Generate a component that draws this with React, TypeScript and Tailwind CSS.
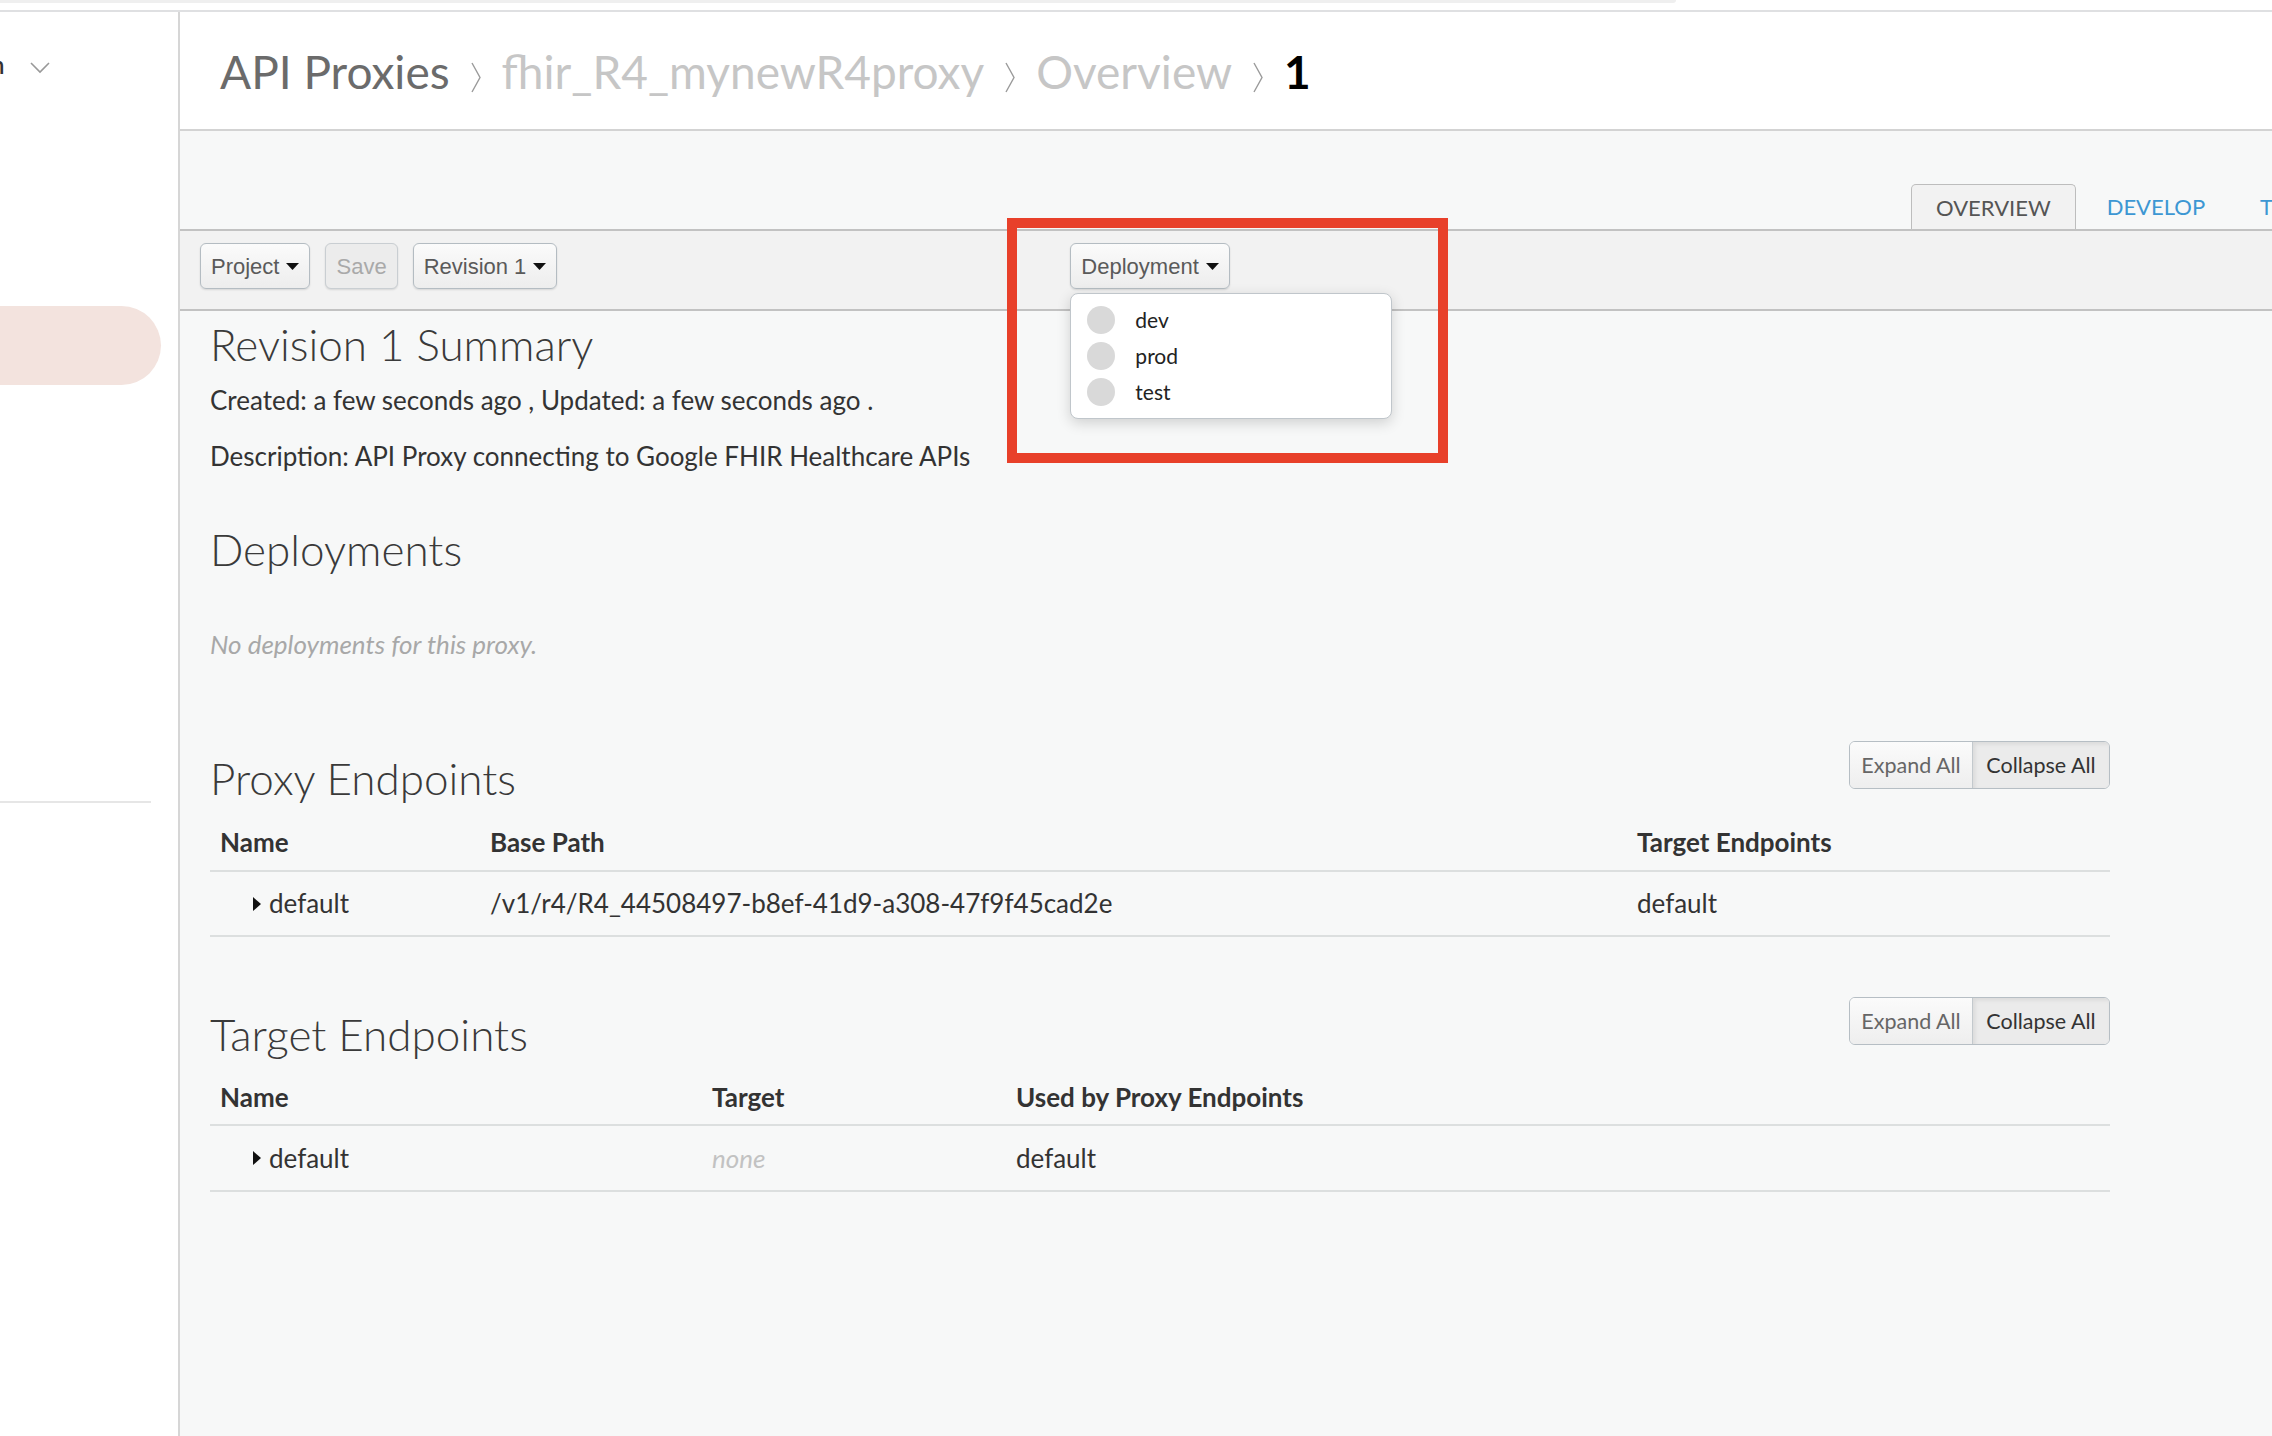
import React from "react";

const lato = { fontFamily: "Lato, 'Open Sans', sans-serif" };

function Caret() {
  return (
    <svg width="13" height="7" viewBox="0 0 13 7" className="shrink-0">
      <polygon points="0,0 13,0 6.5,7" fill="#111" />
    </svg>
  );
}

function RowCaret() {
  return (
    <svg width="8" height="14" viewBox="0 0 8 14" className="shrink-0">
      <polygon points="0,0 8,7 0,14" fill="#111" />
    </svg>
  );
}

function Sep() {
  return (
    <svg width="14" height="31" viewBox="0 0 14 31" className="mx-[19px] mt-[13px] shrink-0">
      <polyline points="3,1 11,15.5 3,30" fill="none" stroke="#9a9a9a" strokeWidth="1.4" />
    </svg>
  );
}

function ToolButton({ label, caret, disabled }: { label: string; caret?: boolean; disabled?: boolean }) {
  return (
    <div
      className={
        "h-[46px] px-[10px] flex items-center gap-[7px] rounded-[6px] border-[1.5px] text-[22px] shadow-[0_1px_2px_rgba(0,0,0,0.12)] " +
        (disabled
          ? "bg-[#ececec] border-[#c9ced2] text-[#a9a9a9]"
          : "bg-gradient-to-b from-[#fbfbfb] to-[#ededed] border-[#b4bcc2] text-[#5a5a5a]")
      }
      style={{ fontFamily: "'Liberation Sans', Arial, sans-serif" }}
    >
      <span>{label}</span>
      {caret && <Caret />}
    </div>
  );
}

function ExpandCollapse() {
  return (
    <div className="flex h-[48px] rounded-[6px] border-[1.5px] border-[#b6bec4] overflow-hidden text-[21.5px]">
      <div className="w-[123px] flex items-center justify-center bg-gradient-to-b from-[#fbfbfb] to-[#eeeeee] text-[#666] border-r-[1.5px] border-[#c3c9cd]">
        Expand All
      </div>
      <div className="w-[136px] flex items-center justify-center bg-[#ebebeb] text-[#333] shadow-[inset_2px_2px_4px_rgba(0,0,0,0.08)]">
        Collapse All
      </div>
    </div>
  );
}

export default function App() {
  return (
    <div className="w-[2272px] h-[1436px] bg-white overflow-hidden flex flex-col" style={lato}>
      {/* top strip */}
      <div className="h-[10px] shrink-0">
        <div className="h-[3px] w-[1676px] bg-[#efefef] rounded-br-[3px]" />
      </div>
      <div className="flex-1 flex border-t-2 border-[#dfe0e2] pr-[2px]">
        {/* sidebar */}
        <aside className="w-[180px] shrink-0 border-r-2 border-[#d6d6d6] flex flex-col">
          <div className="h-[96px] flex items-center pt-[10px]">
            <span className="text-[24px] font-semibold text-[#333] -ml-[9px]">n</span>
            <svg width="20" height="12" viewBox="0 0 20 12" className="ml-[26px] mt-[6px]">
              <polyline points="1,1 10,10 19,1" fill="none" stroke="#999" strokeWidth="1.6" />
            </svg>
          </div>
          <div className="mt-[198px] h-[79px] w-[161px] bg-[#f3e3de] rounded-r-full" />
          <div className="mt-[416px] h-[2px] w-[151px] bg-[#e6e6e6]" />
        </aside>

        {/* main */}
        <main className="flex-1 flex flex-col bg-[#f7f8f8] border-r-2 border-[#e4e4e4]">
          {/* breadcrumb */}
          <header className="h-[119px] shrink-0 bg-white border-b-2 border-[#d3d3d3] flex items-start pl-[40px] pt-[37px]">
            <div className="flex items-start text-[46px] leading-none">
              <span className="text-[#6b6b6b]">API Proxies</span>
              <Sep />
              <span className="text-[#c6c6c6]">fhir_R4_mynewR4proxy</span>
              <Sep />
              <span className="text-[#c6c6c6]">Overview</span>
              <Sep />
              <span className="text-black font-bold">1</span>
            </div>
          </header>

          {/* tabs */}
          <div className="h-[98px] shrink-0 flex items-end pl-[1731px] overflow-hidden">
            <div className="shrink-0 h-[46px] px-[24px] flex items-center rounded-t-[5px] border-[1.5px] border-b-0 border-[#bdbdbd] bg-[#f2f2f2] text-[22px] text-[#555] relative top-[1px]">
              OVERVIEW
            </div>
            <div className="shrink-0 h-[46px] pl-[31px] pr-[24px] flex items-center text-[22px] text-[#3d97d3]">
              DEVELOP
            </div>
            <div className="shrink-0 h-[46px] pl-[31px] flex items-center text-[22px] text-[#3d97d3]">
              TRACE
            </div>
          </div>

          {/* toolbar */}
          <div className="h-[82px] shrink-0 bg-[#f2f2f2] border-y-2 border-[#c2c2c2] flex items-start pt-[12px] pl-[20px]">
            <div className="flex gap-[15px]">
              <ToolButton label="Project" caret />
              <ToolButton label="Save" disabled />
              <ToolButton label="Revision 1" caret />
            </div>
            <div className="relative ml-[513px]">
              <ToolButton label="Deployment" caret />
              <div className="absolute left-0 top-[50px] w-[322px] py-[8px] bg-white rounded-[8px] border-[1.5px] border-[#c0c6cb] shadow-[0_4px_14px_rgba(0,0,0,0.16)] z-10">
                {["dev", "prod", "test"].map((env) => (
                  <div key={env} className="h-[36px] flex items-center pl-[16px]">
                    <span className="w-[28px] h-[28px] rounded-full bg-[#d9d9d9]" />
                    <span className="ml-[20px] text-[21px] text-[#222]">{env}</span>
                  </div>
                ))}
              </div>
              <div className="absolute -left-[63px] -top-[25px] w-[441px] h-[245px] border-[10px] border-[#e8402a] z-20 pointer-events-none" />
            </div>
          </div>

          {/* content */}
          <div className="px-[30px] w-[1960px] flex flex-col text-[#333]">
            <div className="h-[66px] flex items-center text-[44px] font-light text-[#3a3a3a]">Revision 1 Summary</div>
            <div className="mt-[3px] h-[40px] flex items-center text-[26px]">
              Created: a few seconds ago , Updated: a few seconds ago .
            </div>
            <div className="mt-[16px] h-[40px] flex items-center text-[26px]">
              Description: API Proxy connecting to Google FHIR Healthcare APIs
            </div>

            <div className="mt-[37px] h-[72px] flex items-center text-[44px] font-light text-[#3a3a3a]">Deployments</div>
            <div className="mt-[41px] h-[36px] flex items-center text-[26px] italic text-[#a8a8a8]">
              No deployments for this proxy.
            </div>

            {/* proxy endpoints */}
            <div className="mt-[79px] flex items-start justify-between">
              <div className="h-[73px] flex items-center text-[44px] font-light text-[#3a3a3a]">Proxy Endpoints</div>
              <ExpandCollapse />
            </div>
            <div className="grid grid-cols-[280px_1147px_1fr] text-[26px]">
              <div className="h-[58px] flex items-center pl-[10px] font-bold border-b-2 border-[#dcdfdf]">Name</div>
              <div className="h-[58px] flex items-center font-bold border-b-2 border-[#dcdfdf]">Base Path</div>
              <div className="h-[58px] flex items-center font-bold border-b-2 border-[#dcdfdf]">Target Endpoints</div>
              <div className="h-[65px] flex items-center pl-[43px] gap-[8px] border-b-2 border-[#dcdfdf]">
                <RowCaret />
                <span>default</span>
              </div>
              <div className="h-[65px] flex items-center border-b-2 border-[#dcdfdf]">
                /v1/r4/R4_44508497-b8ef-41d9-a308-47f9f45cad2e
              </div>
              <div className="h-[65px] flex items-center border-b-2 border-[#dcdfdf]">default</div>
            </div>

            {/* target endpoints */}
            <div className="mt-[60px] flex items-start justify-between">
              <div className="h-[73px] flex items-center text-[44px] font-light text-[#3a3a3a]">Target Endpoints</div>
              <ExpandCollapse />
            </div>
            <div className="grid grid-cols-[502px_304px_1fr] text-[26px]">
              <div className="h-[56px] flex items-center pl-[10px] font-bold border-b-2 border-[#dcdfdf]">Name</div>
              <div className="h-[56px] flex items-center font-bold border-b-2 border-[#dcdfdf]">Target</div>
              <div className="h-[56px] flex items-center font-bold border-b-2 border-[#dcdfdf]">Used by Proxy Endpoints</div>
              <div className="h-[66px] flex items-center pl-[43px] gap-[8px] border-b-2 border-[#dcdfdf]">
                <RowCaret />
                <span>default</span>
              </div>
              <div className="h-[66px] flex items-center italic text-[#c2c2c2] border-b-2 border-[#dcdfdf]">none</div>
              <div className="h-[66px] flex items-center border-b-2 border-[#dcdfdf]">default</div>
            </div>
          </div>
        </main>
      </div>
    </div>
  );
}
